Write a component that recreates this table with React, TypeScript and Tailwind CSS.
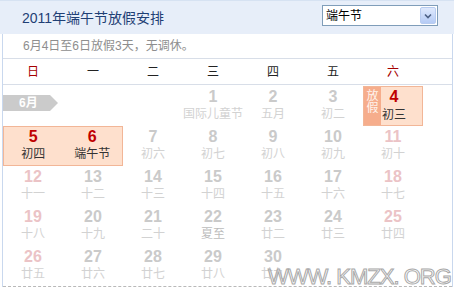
import React from "react";

type C = { n: number; l: string; nc: string; lc: string };

const G = "text-[#cacaca]";
const P = "text-[#ebc3c6]";
const L = "text-[#d2d2d2]";

function Day({ c }: { c: C }) {
  return (
    <div className="h-[40px] flex flex-col items-center pt-[3px]">
      <div className={"text-[16px] leading-[16px] font-bold " + c.nc}>{c.n}</div>
      <div className={"mt-[2px] text-[12px] leading-[14px] whitespace-nowrap " + c.lc}>{c.l}</div>
    </div>
  );
}

const row3: C[] = [
  { n: 12, l: "十一", nc: P, lc: L },
  { n: 13, l: "十二", nc: G, lc: L },
  { n: 14, l: "十三", nc: G, lc: L },
  { n: 15, l: "十四", nc: G, lc: L },
  { n: 16, l: "十五", nc: G, lc: L },
  { n: 17, l: "十六", nc: G, lc: L },
  { n: 18, l: "十七", nc: P, lc: L },
];
const row4: C[] = [
  { n: 19, l: "十八", nc: P, lc: L },
  { n: 20, l: "十九", nc: G, lc: L },
  { n: 21, l: "二十", nc: G, lc: L },
  { n: 22, l: "夏至", nc: G, lc: "text-[#bcbcbc]" },
  { n: 23, l: "廿二", nc: G, lc: L },
  { n: 24, l: "廿三", nc: G, lc: L },
  { n: 25, l: "廿四", nc: P, lc: L },
];
const row5: C[] = [
  { n: 26, l: "廿五", nc: P, lc: L },
  { n: 27, l: "廿六", nc: G, lc: L },
  { n: 28, l: "廿七", nc: G, lc: L },
  { n: 29, l: "廿八", nc: G, lc: L },
  { n: 30, l: "廿九", nc: G, lc: L },
];
const row2rest: C[] = [
  { n: 7, l: "初六", nc: G, lc: L },
  { n: 8, l: "初七", nc: G, lc: L },
  { n: 9, l: "初八", nc: G, lc: L },
  { n: 10, l: "初九", nc: G, lc: L },
  { n: 11, l: "初十", nc: P, lc: L },
];

const weekdays = ["日", "一", "二", "三", "四", "五", "六"];

export default function App() {
  return (
    <div
      className="relative w-[454px] h-[289px] bg-white overflow-hidden"
      style={{ fontFamily: '"Liberation Sans", "Noto Sans CJK SC", sans-serif' }}
    >
      {/* header */}
      <div className="h-[34px] bg-[#e7eef9] border-t border-[#d6e2f2] flex items-center justify-between pl-[22px] pr-[16px]">
        <div className="text-[14px] leading-[16px] text-[#1f3f75]">2011年端午节放假安排</div>
        <div className="w-[116px] h-[21px] border border-[#7f9db9] bg-white flex items-center justify-between pl-[3px] pr-[1px] mt-[-4px]">
          <span className="text-[12px] leading-[14px] text-black">端午节</span>
          <div className="w-[16px] h-[17px] rounded-[2px] border border-[#b8ccf0] bg-gradient-to-b from-[#dfe9fd] to-[#b5cbf5] flex items-center justify-center">
            <svg width="8" height="6" viewBox="0 0 8 6">
              <path d="M1 1.5 L4 4.5 L7 1.5" fill="none" stroke="#4d6185" strokeWidth="1.6" />
            </svg>
          </div>
        </div>
      </div>

      <div className="ml-[2px] w-[451px] border-l border-r border-[#c9d8ee]">
        {/* subtitle */}
        <div className="h-[25px] border-b border-[#d8dee8] flex items-center pl-[20px]">
          <span className="text-[12px] leading-[14px] text-[#8e8e8e]">6月4日至6日放假3天，无调休。</span>
        </div>
        {/* weekdays */}
        <div className="h-[26px] border-b border-[#d8dee8] grid grid-cols-[repeat(7,60px)] items-center">
          {weekdays.map((w, i) => (
            <div
              key={w}
              className={
                "text-center text-[12px] leading-[14px] " +
                (i === 0 || i === 6 ? "text-[#a50000]" : "text-[#222222]")
              }
            >
              {w}
            </div>
          ))}
        </div>

        <div className="pt-[1px] border-b border-dashed border-[#b9b9b9]">
          {/* row 1 */}
          <div className="grid grid-cols-[repeat(7,60px)] h-[40px]">
            <div className="h-[40px] pt-[9px]">
              <div className="w-[55px] h-[16px] bg-[#cbcbcb] [clip-path:polygon(0_0,47px_0,55px_50%,47px_100%,0_100%)] flex items-center pl-[16px]">
                <span className="text-[12px] leading-[14px] font-bold text-white">6月</span>
              </div>
            </div>
            <div />
            <div />
            <Day c={{ n: 1, l: "国际儿童节", nc: G, lc: L }} />
            <Day c={{ n: 2, l: "五月", nc: G, lc: L }} />
            <Day c={{ n: 3, l: "初二", nc: G, lc: L }} />
            <div className="relative h-[40px] bg-[#fee0cd] border border-[#f2b697] flex flex-col items-center pt-[2px]">
              <div className="absolute left-0 top-0 bottom-0 w-[17px] bg-[#f6ad8c] flex flex-col items-center pt-[3px] text-[12px] leading-[12px] text-[#fff4ec]">
                <span>放</span>
                <span>假</span>
              </div>
              <div className="text-[16px] leading-[16px] font-bold text-[#c00000] pl-[2px]">4</div>
              <div className="mt-[3px] text-[12px] leading-[14px] text-[#333333] pl-[2px]">初三</div>
            </div>
          </div>

          {/* row 2 */}
          <div className="grid grid-cols-[repeat(7,60px)] h-[40px]">
            <div className="col-span-2 h-[40px] bg-[#fee0cd] border border-[#f2b697] flex">
              <div className="w-[59px] flex flex-col items-center pt-[2px]">
                <div className="text-[16px] leading-[16px] font-bold text-[#c00000]">5</div>
                <div className="mt-[2px] text-[12px] leading-[14px] text-[#333333]">初四</div>
              </div>
              <div className="w-[60px] flex flex-col items-center pt-[2px]">
                <div className="text-[16px] leading-[16px] font-bold text-[#c00000]">6</div>
                <div className="mt-[2px] text-[12px] leading-[14px] text-[#333333]">端午节</div>
              </div>
            </div>
            {row2rest.map((c) => (
              <Day key={c.n} c={c} />
            ))}
          </div>

          {[row3, row4, row5].map((r, i) => (
            <div key={i} className="grid grid-cols-[repeat(7,60px)] h-[40px]">
              {r.map((c) => (
                <Day key={c.n} c={c} />
              ))}
            </div>
          ))}
        </div>
      </div>

      {/* watermark */}
      <div className="absolute left-[268px] top-[266px] text-[22px] leading-[22px] whitespace-nowrap text-transparent [-webkit-text-stroke:1px_#a8a8a8] tracking-[-1px]">
        WWW. KMZX. ORG
      </div>
    </div>
  );
}
